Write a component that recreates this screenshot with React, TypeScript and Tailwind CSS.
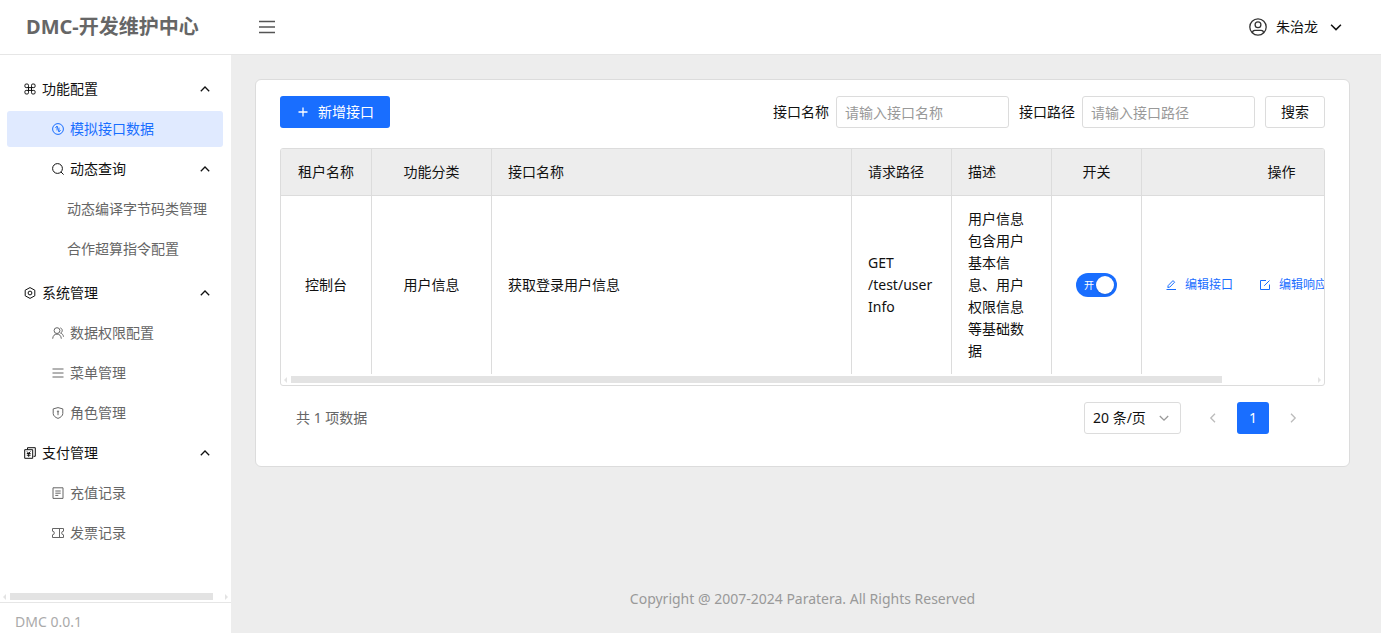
import { useState } from 'react'
import type { ReactNode } from 'react'

interface IconProps {
  className?: string
  box?: number
  stroke?: number
  children: ReactNode
}

function Icon({ className = 'w-3 h-3', box = 12, stroke = 1, children }: IconProps) {
  return (
    <svg
      viewBox={`0 0 ${box} ${box}`}
      className={`${className} shrink-0`}
      fill="none"
      stroke="currentColor"
      strokeWidth={stroke}
      aria-hidden="true"
    >
      {children}
    </svg>
  )
}

const icons = {
  command: (
    <Icon>
      <rect x=".9" y="1" width="3.600" height="3.600" rx="1.300" />
      <rect x="7.500" y="1" width="3.600" height="3.600" rx="1.300" />
      <rect x=".9" y="7.400" width="3.600" height="3.600" rx="1.300" />
      <rect x="7.500" y="7.400" width="3.600" height="3.600" rx="1.300" />
      <path d="M4.500 3.500v5M7.500 3.500v5M3.500 4.600h5M3.500 7.400h5" />
    </Icon>
  ),
  mock: (
    <Icon>
      <circle cx="6" cy="6" r="5.400" />
      <path d="M5 7.500V3L3.300 5M7 4.500V9l1.700-2M5 3l2 6" strokeWidth=".8" />
    </Icon>
  ),
  search: (
    <Icon>
      <circle cx="5.500" cy="5.500" r="4.900" />
      <path d="M9 9l2.600 2.600" />
    </Icon>
  ),
  setting: (
    <Icon>
      <path d="M6 .6l4.800 2.600v5.600L6 11.400 1.200 8.800V3.200z" strokeLinejoin="round" />
      <circle cx="6" cy="6" r="1.900" />
    </Icon>
  ),
  users: (
    <Icon>
      <circle cx="5" cy="3.600" r="2.900" />
      <path d="M.7 11.700c.2-3 1.800-4.600 4.300-4.600s4.100 1.600 4.300 4.600M8.300.9c2.300.6 2.700 3.900.3 5.200 1.700.6 2.700 1.800 2.900 3.600" />
    </Icon>
  ),
  menu: (
    <Icon>
      <path d="M.5 2h11M.5 6h11M.5 10h11" />
    </Icon>
  ),
  shield: (
    <Icon>
      <path d="M6 .6l4.800 1.300v4.600c0 2.200-2 3.900-4.800 4.900-2.800-1-4.800-2.700-4.800-4.900V1.900z" strokeLinejoin="round" />
      <path d="M6 4.500v3.700" />
      <circle cx="6" cy="4.400" r=".6" />
    </Icon>
  ),
  pay: (
    <Icon>
      <path d="M3.500 2.500V.7h7.800v8.600H9.500M.7 2.700h8v8.600h-8z" />
      <path d="M3 4.500l1.700 1.800 1.700-1.800M2.800 6.500h3.800M2.800 8.200h3.800M4.700 6.300v3.500" />
    </Icon>
  ),
  record: (
    <Icon>
      <path d="M1 .8h10v10.600H1zM3.300 4h5.400M3.300 6.200h5.400M3.300 8.400h3" />
    </Icon>
  ),
  ticket: (
    <Icon>
      <path d="M.5 1.500h11v2.700a1.800 1.800 0 0 0 0 3.600v2.700H.5V7.800a1.800 1.800 0 0 0 0-3.600zM7.500 1.500v9" />
    </Icon>
  ),
}

function Chevron({ dir, className = 'w-3 h-3' }: { dir: 'up' | 'down' | 'left' | 'right'; className?: string }) {
  const paths = {
    up: 'M1.800 8.200L6 4l4.200 4.200',
    down: 'M1.800 4L6 8.200 10.200 4',
    left: 'M8 1.800L3.800 6 8 10.200',
    right: 'M4 1.800L8.200 6 4 10.200',
  }
  return (
    <Icon className={className} stroke={1.3}>
      <path d={paths[dir]} />
    </Icon>
  )
}

// Slim horizontal scrollbar with an arrow at each end
function ScrollBar({ thumb }: { thumb: string }) {
  return (
    <div className="flex items-center h-[7px] px-0.5 gap-1 text-[#e3e3e3]">
      <svg viewBox="0 0 4 6" className="w-1 h-1.5 shrink-0" fill="currentColor" aria-hidden="true">
        <path d="M4 0v6L1 3z" />
      </svg>
      <div className="flex-1 h-full">
        <div className={`h-full bg-[#e3e3e3] ${thumb}`} />
      </div>
      <svg viewBox="0 0 4 6" className="w-1 h-1.5 shrink-0" fill="currentColor" aria-hidden="true">
        <path d="M0 0v6l3-3z" />
      </svg>
    </div>
  )
}

interface MenuEntry {
  label: string
  icon?: ReactNode
  level: 1 | 2 | 3
  group?: boolean
  active?: boolean
}

const menus: MenuEntry[][] = [
  [
    { label: '功能配置', icon: icons.command, level: 1, group: true },
    { label: '模拟接口数据', icon: icons.mock, level: 2, active: true },
    { label: '动态查询', icon: icons.search, level: 2, group: true },
    { label: '动态编译字节码类管理', level: 3 },
    { label: '合作超算指令配置', level: 3 },
  ],
  [
    { label: '系统管理', icon: icons.setting, level: 1, group: true },
    { label: '数据权限配置', icon: icons.users, level: 2 },
    { label: '菜单管理', icon: icons.menu, level: 2 },
    { label: '角色管理', icon: icons.shield, level: 2 },
    { label: '支付管理', icon: icons.pay, level: 1, group: true },
    { label: '充值记录', icon: icons.record, level: 2 },
    { label: '发票记录', icon: icons.ticket, level: 2 },
  ],
]

const indent = { 1: 'pl-[17px]', 2: 'pl-[45px]', 3: 'pl-[60px]' }

function MenuItem({ item }: { item: MenuEntry }) {
  const base = `flex items-center gap-1.5 w-full h-9 pr-3 rounded-[3px] whitespace-nowrap ${indent[item.level]}`
  if (item.group) {
    return (
      <button type="button" aria-expanded="true" className={`${base} text-[#111]`}>
        {item.icon}
        <span className="flex-1 text-left">{item.label}</span>
        <Chevron dir="up" />
      </button>
    )
  }
  return (
    <a href="#" className={`${base} ${item.active ? 'bg-[#e0eaff] text-[#196eff]' : 'text-[#666]'}`}>
      {item.icon}
      {item.label}
    </a>
  )
}

const columns = [
  { title: '租户名称', width: 'w-[91px]', align: 'text-center' },
  { title: '功能分类', width: 'w-[120px]', align: 'text-center' },
  { title: '接口名称', width: 'w-[360px]', align: 'text-left' },
  { title: '请求路径', width: 'w-[100px]', align: 'text-left' },
  { title: '描述', width: 'w-[100px]', align: 'text-left' },
  { title: '开关', width: 'w-[90px]', align: 'text-center' },
  { title: '操作', width: 'w-[280px]', align: 'text-center' },
]

const rows = [
  {
    tenant: '控制台',
    category: '用户信息',
    name: '获取登录用户信息',
    method: 'GET',
    path: '/test/userInfo',
    desc: '用户信息包含用户基本信息、用户权限信息等基础数据',
  },
]

export default function App() {
  const [enabled, setEnabled] = useState(true)
  const [name, setName] = useState('')
  const [path, setPath] = useState('')

  const cell = 'px-4 py-3 border-r border-[#dcdcdc]'
  const field =
    'w-[173px] h-8 px-2 border border-[#dcdcdc] rounded-[3px] bg-white outline-none placeholder:text-[#999] focus:border-[#196eff]'

  return (
    <div className="flex flex-col min-h-screen bg-[#ededed] text-sm leading-[22px] text-[#111] font-['Noto_Sans','Noto_Sans_CJK_SC',sans-serif]">
      {/* Header */}
      <header className="flex items-center h-[55px] pl-[26px] pr-[38px] bg-white border-b border-[#e6e6e6]">
        <h1 className="w-[233px] text-xl font-bold text-[#666] whitespace-nowrap">DMC-开发维护中心</h1>
        <button type="button" aria-label="收起菜单" className="text-[#555]">
          <Icon className="w-4 h-4" box={16} stroke={1.4}>
            <path d="M0 2.500h16M0 8h16M0 13.500h16" />
          </Icon>
        </button>
        <button type="button" className="flex items-center gap-[9px] ml-auto">
          <Icon className="w-[18px] h-[18px] text-[#333]" box={18} stroke={1.3}>
            <circle cx="9" cy="9" r="8.200" />
            <circle cx="9" cy="6.800" r="2.900" />
            <path d="M3.500 15v-.4c0-1.400 1-2.300 2.400-2.300h6.200c1.400 0 2.400.9 2.400 2.300v.4" />
          </Icon>
          朱治龙
          <Chevron dir="down" className="w-[14px] h-[14px] ml-0.5" />
        </button>
      </header>

      <div className="flex flex-1">
        {/* Sidebar */}
        <aside className="flex flex-col w-[231px] shrink-0 bg-white">
          <nav className="flex-1 pt-4 pl-[7px] pr-2 space-y-2">
            {menus.map((section, i) => (
              <div key={i} className="space-y-1">
                {section.map(item => (
                  <MenuItem key={item.label} item={item} />
                ))}
              </div>
            ))}
          </nav>
          <div className="pb-0.5">
            <ScrollBar thumb="w-[96%]" />
          </div>
          <div className="h-[31px] pt-2 pl-[15px] border-t border-[#e6e6e6] text-[#aaa]">DMC 0.0.1</div>
        </aside>

        <main className="flex flex-col flex-1 min-w-0 pt-6 pl-6 pr-[31px]">
          <section className="px-6 pt-4 pb-8 bg-white border border-[#dcdcdc] rounded-md">
            {/* Toolbar */}
            <div className="flex items-center justify-between mb-5">
              <button
                type="button"
                className="flex items-center justify-center gap-2 w-[110px] h-8 rounded-[3px] bg-[#196eff] text-white"
              >
                <Icon className="w-3.5 h-3.5" box={14} stroke={1.3}>
                  <path d="M7 2.500v9M2.500 7h9" />
                </Icon>
                新增接口
              </button>
              <form className="flex items-center gap-2.5" onSubmit={e => e.preventDefault()}>
                <div className="flex items-center gap-[7px]">
                  <label htmlFor="api-name">接口名称</label>
                  <input
                    id="api-name"
                    type="text"
                    value={name}
                    onChange={e => setName(e.target.value)}
                    placeholder="请输入接口名称"
                    className={field}
                  />
                </div>
                <div className="flex items-center gap-[7px]">
                  <label htmlFor="api-path">接口路径</label>
                  <input
                    id="api-path"
                    type="text"
                    value={path}
                    onChange={e => setPath(e.target.value)}
                    placeholder="请输入接口路径"
                    className={field}
                  />
                </div>
                <button type="submit" className="w-[60px] h-8 border border-[#dcdcdc] rounded-[3px] bg-white">
                  搜索
                </button>
              </form>
            </div>

            {/* Table */}
            <div className="border border-[#dcdcdc] rounded-[3px] overflow-hidden">
              <div className="overflow-hidden">
                <table className="table-fixed w-[1141px] border-separate border-spacing-0">
                  <thead>
                    <tr className="bg-[#ededed]">
                      {columns.map(col => (
                        <th
                          key={col.title}
                          className={`${col.width} ${col.align} ${cell} border-b font-normal whitespace-nowrap`}
                        >
                          {col.title}
                        </th>
                      ))}
                    </tr>
                  </thead>
                  <tbody>
                    {rows.map(row => (
                      <tr key={row.path}>
                        <td className={`${cell} text-center`}>{row.tenant}</td>
                        <td className={`${cell} text-center`}>{row.category}</td>
                        <td className={cell}>{row.name}</td>
                        <td className={`${cell} break-all`}>
                          <div>{row.method}</div>
                          <div>{row.path}</div>
                        </td>
                        <td className={cell}>{row.desc}</td>
                        <td className={cell}>
                          <label
                            className={`flex items-center justify-between w-[41px] h-6 mx-auto pl-2 pr-[3px] rounded-full cursor-pointer ${enabled ? 'bg-[#196eff]' : 'bg-[#ccc] flex-row-reverse'}`}
                          >
                            <input
                              type="checkbox"
                              aria-label="开关"
                              checked={enabled}
                              onChange={e => setEnabled(e.target.checked)}
                              className="sr-only"
                            />
                            <span className="text-[10px] text-white">{enabled ? '开' : '关'}</span>
                            <span className="w-[18px] h-[18px] rounded-full bg-white shadow-sm" />
                          </label>
                        </td>
                        <td className="pl-[23px]">
                          <div className="flex gap-[26px] text-xs leading-[22px] text-[#196eff] whitespace-nowrap">
                            <button type="button" className="flex items-center gap-2">
                              <Icon>
                                <path d="M1.500 10.500h9.500M2.800 8.500l.4-2L8 1.600l1.600 1.600-4.800 4.900z" />
                              </Icon>
                              编辑接口
                            </button>
                            <button type="button" className="flex items-center gap-2">
                              <Icon>
                                <path d="M7 1.500H1.500v9h9V5.500M5.200 6.800l5.300-5.300" />
                              </Icon>
                              编辑响应
                            </button>
                          </div>
                        </td>
                      </tr>
                    ))}
                  </tbody>
                </table>
              </div>
              <div className="py-0.5">
                <ScrollBar thumb="w-[91%]" />
              </div>
            </div>

            {/* Pagination */}
            <div className="flex items-center gap-2 mt-4 px-4">
              <span className="mr-auto text-[#666]">共 1 项数据</span>
              <div className="relative mr-2">
                <select
                  aria-label="每页条数"
                  className="w-[97px] h-8 pl-2 pr-6 appearance-none border border-[#dcdcdc] rounded-[3px] bg-white"
                >
                  <option>20 条/页</option>
                  <option>50 条/页</option>
                </select>
                <span className="absolute inset-y-0 right-[11px] flex items-center text-[#999] pointer-events-none">
                  <Chevron dir="down" />
                </span>
              </div>
              <button type="button" aria-label="上一页" className="flex items-center justify-center w-8 h-8 text-[#bbb]">
                <Chevron dir="left" />
              </button>
              <button type="button" className="w-8 h-8 rounded-[3px] bg-[#196eff] text-white">
                1
              </button>
              <button type="button" aria-label="下一页" className="flex items-center justify-center w-8 h-8 text-[#bbb]">
                <Chevron dir="right" />
              </button>
            </div>
          </section>

          <footer className="mt-auto pt-6 pb-[23px] text-center text-[#999]">
            Copyright @ 2007-2024 Paratera. All Rights Reserved
          </footer>
        </main>
      </div>
    </div>
  )
}
